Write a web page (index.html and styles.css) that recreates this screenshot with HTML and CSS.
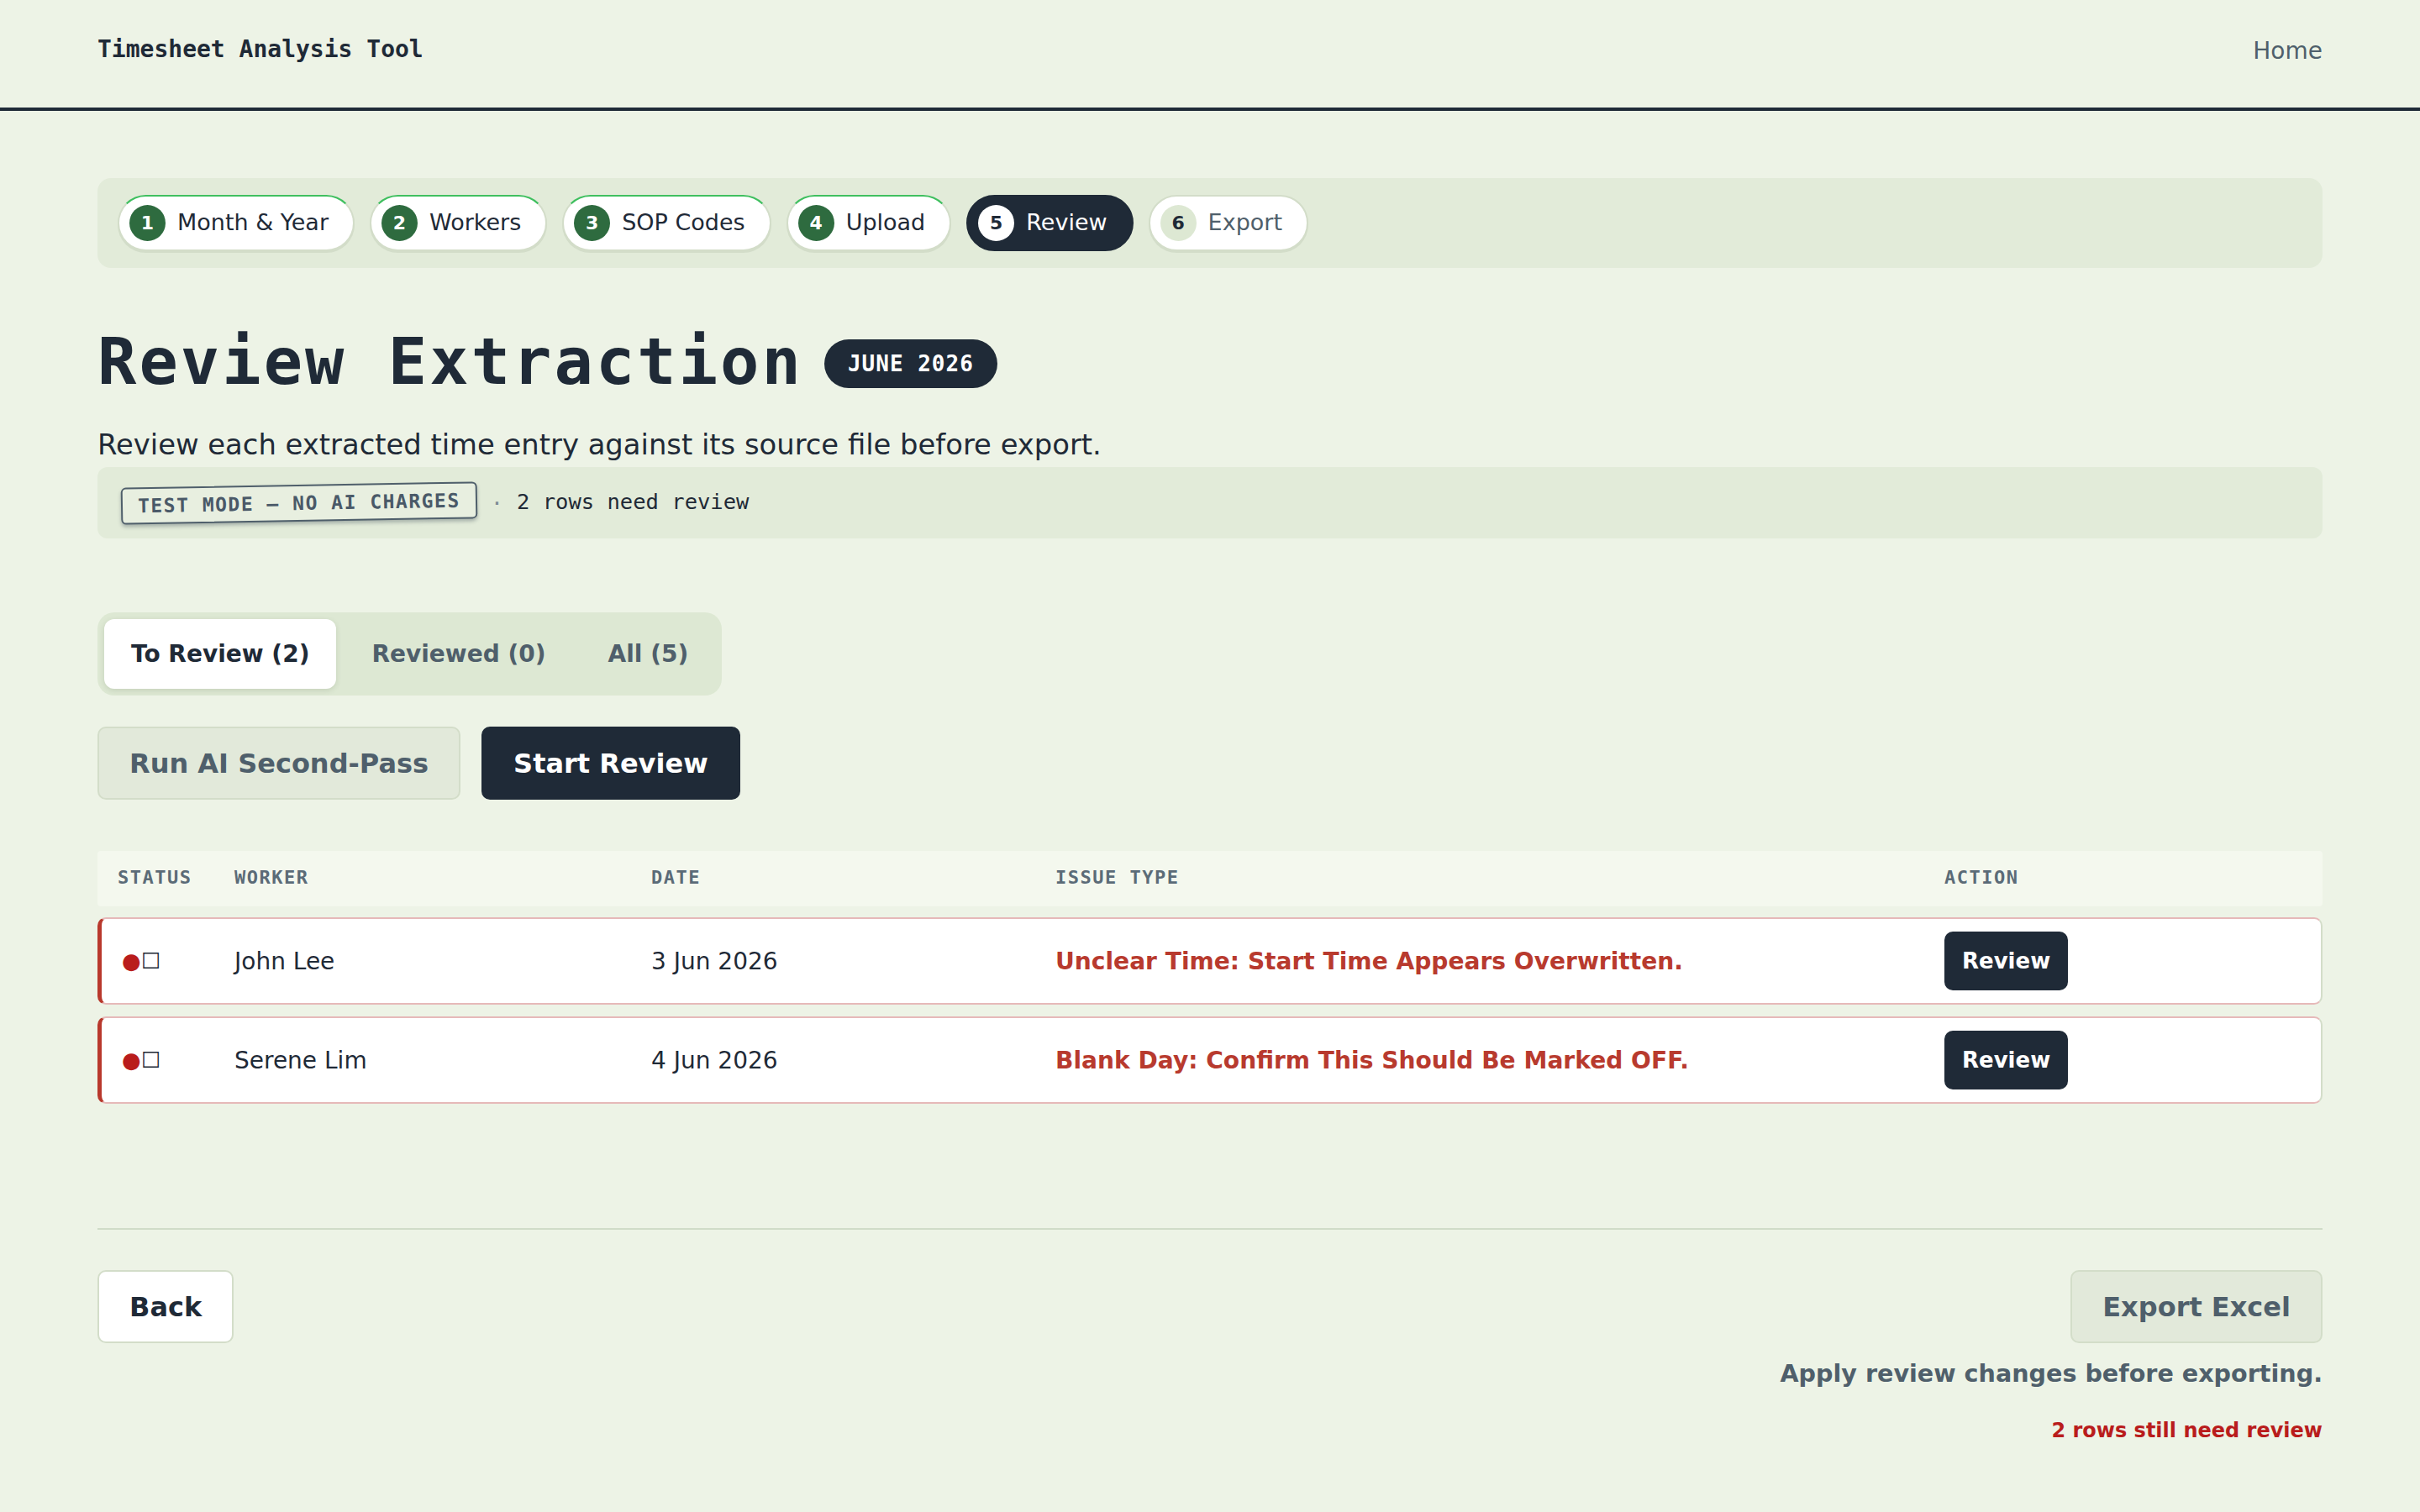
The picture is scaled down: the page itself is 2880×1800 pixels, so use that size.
FILE: index.html
```html
<!DOCTYPE html>
<html lang="en">
<head>
<meta charset="utf-8">
<title>Timesheet Analysis Tool</title>
<link rel="stylesheet" href="styles.css">
</head>
<body>
<header class="topbar">
  <div class="brand">Timesheet Analysis Tool</div>
  <a class="nav-link" href="#">Home</a>
</header>

<main class="page">
  <nav class="stepper">
    <div class="step done"><span class="step-num">1</span><span class="step-label">Month &amp; Year</span></div>
    <div class="step done"><span class="step-num">2</span><span class="step-label">Workers</span></div>
    <div class="step done"><span class="step-num">3</span><span class="step-label">SOP Codes</span></div>
    <div class="step done"><span class="step-num">4</span><span class="step-label">Upload</span></div>
    <div class="step active"><span class="step-num">5</span><span class="step-label">Review</span></div>
    <div class="step pending"><span class="step-num">6</span><span class="step-label">Export</span></div>
  </nav>

  <div class="title-row">
    <h1 class="title">Review Extraction</h1>
    <span class="badge">JUNE 2026</span>
  </div>
  <p class="subtitle">Review each extracted time entry against its source file before export.</p>

  <div class="info-bar">
    <span class="stamp">TEST MODE — NO AI CHARGES</span>
    <span class="sep">·</span>
    <span class="info-text">2 rows need review</span>
  </div>

  <div class="tabs">
    <button class="tab active">To Review (2)</button>
    <button class="tab">Reviewed (0)</button>
    <button class="tab">All (5)</button>
  </div>

  <div class="actions">
    <button class="btn btn-light">Run AI Second-Pass</button>
    <button class="btn btn-dark">Start Review</button>
  </div>

  <div class="table">
    <div class="thead">
      <div class="th">Status</div>
      <div class="th">Worker</div>
      <div class="th">Date</div>
      <div class="th">Issue Type</div>
      <div class="th">Action</div>
    </div>
    <div class="row flagged">
      <div class="cell status"><span class="dot">●</span><span class="box">☐</span></div>
      <div class="cell">John Lee</div>
      <div class="cell">3 Jun 2026</div>
      <div class="cell issue">Unclear Time: Start Time Appears Overwritten.</div>
      <div class="cell"><button class="btn-small">Review</button></div>
    </div>
    <div class="row flagged">
      <div class="cell status"><span class="dot">●</span><span class="box">☐</span></div>
      <div class="cell">Serene Lim</div>
      <div class="cell">4 Jun 2026</div>
      <div class="cell issue">Blank Day: Confirm This Should Be Marked OFF.</div>
      <div class="cell"><button class="btn-small">Review</button></div>
    </div>
  </div>

  <div class="footer">
    <button class="btn btn-white">Back</button>
    <div class="footer-right">
      <button class="btn btn-light">Export Excel</button>
      <p class="note">Apply review changes before exporting.</p>
      <p class="warn">2 rows still need review</p>
    </div>
  </div>
</main>
</body>
</html>
```

FILE: styles.css
```css
* { box-sizing: border-box; }

html, body {
  margin: 0;
  padding: 0;
}

body {
  background: #edf3e6;
  color: #1f2a37;
  font-family: "DejaVu Sans", sans-serif;
  width: 2880px;
  min-height: 1800px;
}

.topbar {
  height: 132px;
  padding: 0 116px 8px;
  display: flex;
  align-items: center;
  justify-content: space-between;
  border-bottom: 4px solid #1f2a37;
}

.brand {
  font-family: "DejaVu Sans Mono", monospace;
  font-weight: 700;
  font-size: 28px;
  line-height: 1.2;
  margin-top: -2px;
}

.nav-link {
  font-size: 28px;
  line-height: 1.2;
  color: #4f5f6b;
  text-decoration: none;
  margin-top: 2px;
}

.page {
  padding: 80px 116px 60px;
}

/* Stepper */
.stepper {
  background: #e2ebd9;
  border-radius: 16px;
  padding: 20px 24px;
  display: flex;
  gap: 18px;
}

.step {
  display: flex;
  align-items: center;
  gap: 14px;
  height: 67px;
  padding: 0 29px 0 12px;
  border: 2px solid #d3ddc9;
  border-radius: 34px;
  background: #ffffff;
  box-shadow: 0 2px 0 #d3ddc9;
  font-size: 27px;
}

.step.done { border-top-color: #3fbf5f; }

.step-num {
  width: 43px;
  height: 43px;
  border-radius: 50%;
  display: flex;
  align-items: center;
  justify-content: center;
  font-weight: 700;
  font-size: 22px;
  background: #2e6b3f;
  color: #ffffff;
}

.step-label { color: #1f2a37; margin-top: -2px; }

.step.active {
  background: #1f2a37;
  border-color: #1f2a37;
  box-shadow: none;
}
.step.active .step-num { background: #ffffff; color: #1f2a37; }
.step.active .step-label { color: #ffffff; }

.step.pending .step-num { background: #dde8d3; color: #1f2a37; }
.step.pending .step-label { color: #4f5f6b; }

/* Title */
.title-row {
  display: flex;
  align-items: center;
  gap: 25px;
  margin-top: 66px;
}

.title {
  margin: 0;
  font-family: "DejaVu Sans Mono", monospace;
  font-weight: 700;
  font-size: 77px;
  letter-spacing: 3.05px;
  line-height: 1.2;
}

.badge {
  display: inline-flex;
  align-items: center;
  height: 58px;
  padding: 0 28px;
  border-radius: 29px;
  background: #1f2a37;
  color: #ffffff;
  font-family: "DejaVu Sans Mono", monospace;
  font-weight: 700;
  font-size: 26px;
  letter-spacing: 1px;
  margin-top: 4px;
}

.subtitle {
  margin: 28px 0 2px;
  font-size: 33.8px;
  line-height: 1.45;
  color: #1f2a37;
}

.info-bar {
  height: 85px;
  background: #e2ebd9;
  border-radius: 12px;
  padding: 0 28px;
  display: flex;
  align-items: center;
  gap: 16px;
  font-family: "DejaVu Sans Mono", monospace;
}

.stamp {
  display: inline-block;
  padding: 7px 18px;
  border: 2px solid #4f5f6b;
  border-radius: 6px;
  color: #4a5968;
  font-weight: 700;
  font-size: 23px;
  letter-spacing: 1.5px;
  transform: rotate(-1deg);
  box-shadow: 0 3px 4px rgba(60, 75, 85, 0.35);
  background: #e8efe0;
}

.sep {
  color: #7d8b95;
  font-size: 25.5px;
}

.info-text {
  font-size: 25.5px;
  color: #1f2a37;
  margin-top: -3px;
}

/* Tabs */
.tabs {
  margin-top: 88px;
  display: inline-flex;
  gap: 10px;
  padding: 8px;
  background: #dde8d3;
  border-radius: 20px;
}

.tab {
  height: 83px;
  padding: 0 32px;
  border: none;
  border-radius: 12px;
  background: transparent;
  font-family: "DejaVu Sans", sans-serif;
  font-weight: 700;
  font-size: 28px;
  color: #4f5f6b;
}

.tab.active {
  background: #ffffff;
  color: #1f2a37;
  box-shadow: 0 2px 6px rgba(60, 80, 50, 0.15);
}

/* Buttons */
.actions {
  margin-top: 37px;
  display: flex;
  gap: 25px;
}

.btn {
  height: 87px;
  padding: 0 36px;
  border: 2px solid #d3ddc9;
  border-radius: 10px;
  font-family: "DejaVu Sans", sans-serif;
  font-weight: 700;
  font-size: 32px;
}

.btn-light {
  background: #e2e9da;
  color: #4f5f6b;
}

.btn-dark {
  background: #1f2a37;
  border-color: #1f2a37;
  color: #ffffff;
}

.btn-white {
  background: #ffffff;
  color: #1f2a37;
}

/* Table */
.table {
  margin-top: 61px;
  display: flex;
  flex-direction: column;
  gap: 13px;
}

.thead {
  height: 66px;
  display: grid;
  grid-template-columns: 139px 496px 481px 1058px 1fr;
  align-items: center;
  background: #f4f8ee;
  border-radius: 4px;
}

.th {
  padding: 0 24px;
  font-family: "DejaVu Sans Mono", monospace;
  font-weight: 700;
  font-size: 22px;
  letter-spacing: 1.5px;
  text-transform: uppercase;
  color: #5b6b77;
  margin-top: -4px;
}

.row {
  display: grid;
  grid-template-columns: 134px 496px 481px 1058px 1fr;
  align-items: center;
  height: 104px;
  background: #ffffff;
  border: 2px solid #e6b9b9;
  border-right-color: #d3ddc9;
  border-left: 5px solid #b8382c;
  border-radius: 10px;
}

.row + .row { margin-top: 1px; }

.cell {
  padding: 0 24px;
  font-size: 28px;
  color: #1f2a37;
}

.status {
  display: flex;
  align-items: center;
  font-size: 26px;
}

.dot { color: #b91c1c; }
.box { color: #1f2a37; }

.issue {
  font-weight: 700;
  font-size: 28.1px;
  color: #b83a2e;
}

.btn-small {
  height: 70px;
  padding: 0 21px;
  border: none;
  border-radius: 10px;
  background: #1f2a37;
  color: #ffffff;
  font-family: "DejaVu Sans", sans-serif;
  font-weight: 700;
  font-size: 26px;
}

/* Footer */
.footer {
  margin-top: 148px;
  padding-top: 48px;
  border-top: 2px solid #d0dcc8;
  display: flex;
  justify-content: space-between;
  align-items: flex-start;
}

.footer-right {
  display: flex;
  flex-direction: column;
  align-items: flex-end;
}

.note {
  margin: 15px 0 0;
  font-weight: 700;
  font-size: 28.6px;
  line-height: 1.5;
  color: #4f5f6b;
}

.warn {
  margin: 28px 0 0;
  font-weight: 700;
  font-size: 24px;
  line-height: 1.5;
  color: #b91c1c;
}
```
